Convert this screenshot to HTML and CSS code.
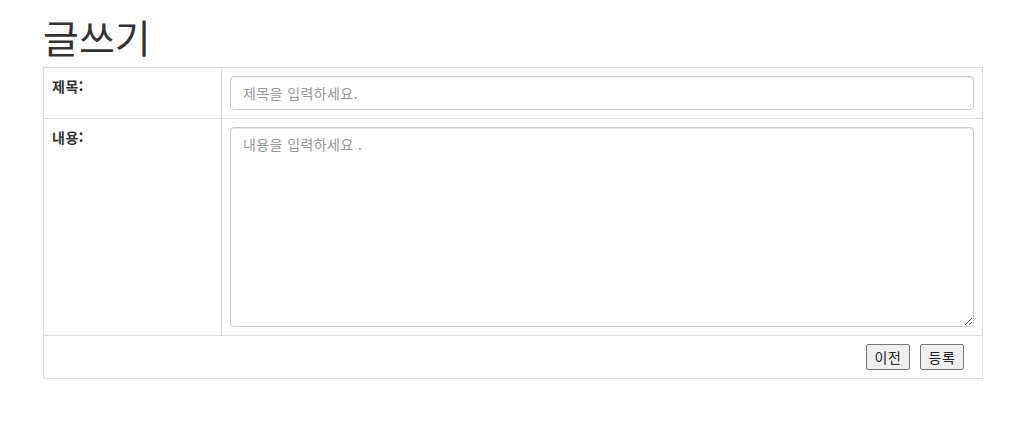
FILE: index.html
```html
<!DOCTYPE html>
<html lang="ko">

<head>
    <meta charset="UTF-8">
    <meta name="viewport" content="width=device-width, initial-scale=1.0">
    <title>글쓰기</title>
    <link rel="stylesheet" href="styles.css">
</head>

<body>
    <div class="container">
        <h1 class="page-title">글쓰기</h1>
        <form class="write-form" onsubmit="return false;">
            <table class="write-table">
                <colgroup>
                    <col class="col-label">
                    <col>
                </colgroup>
                <tr>
                    <th>제목:</th>
                    <td><input type="text" class="form-control" name="title" placeholder="제목을 입력하세요."></td>
                </tr>
                <tr>
                    <th>내용:</th>
                    <td><textarea class="form-control content" name="content" placeholder="내용을 입력하세요 ."></textarea></td>
                </tr>
                <tr>
                    <td colspan="2" class="btn-cell">
                        <div class="btn-bar">
                            <button type="button">이전</button>
                            <button type="submit">등록</button>
                        </div>
                    </td>
                </tr>
            </table>
        </form>
    </div>
</body>

</html>
```

FILE: styles.css
```css
* {
    padding: 0;
    margin: 0;
    box-sizing: border-box;
}

body {
    font-family: "Noto Sans CJK KR", "Liberation Sans", sans-serif;
    font-size: 14px;
    line-height: 20px;
    color: #333333;
    background-color: #FFFFFF;
}

.container {
    width: 940px;
    margin: 0 0 0 43px;
}

.page-title {
    font-size: 39px;
    font-weight: 400;
    line-height: 42px;
    margin: 15px 0 10px 0;
}

.write-table {
    width: 940px;
    border-collapse: collapse;
    table-layout: fixed;
}

.col-label {
    width: 178px;
}

.write-table th,
.write-table td {
    border: 1px solid #DDDDDD;
    padding: 8px;
    vertical-align: top;
    text-align: left;
}

.write-table th {
    font-weight: 700;
    color: #333333;
    letter-spacing: 0.5px;
}

.form-control {
    display: block;
    width: 100%;
    height: 34px;
    padding: 6px 12px;
    font-family: inherit;
    font-size: 14px;
    line-height: 20px;
    letter-spacing: 0.4px;
    color: #555555;
    background-color: #FFFFFF;
    border: 1px solid #CCCCCC;
    border-radius: 4px;
    box-shadow: inset 0 1px 1px rgba(0, 0, 0, .075);
    outline: none;
}

.form-control::placeholder {
    color: #999999;
}

.content {
    height: 200px;
    resize: vertical;
}

.btn-bar {
    display: flex;
    justify-content: flex-end;
    gap: 10px;
    padding-right: 10px;
    height: 26px;
}

.btn-cell button {
    font-family: inherit;
    font-size: 14px;
    line-height: 20px;
    width: 44px;
    height: 26px;
    padding: 1px 6px;
    color: #222222;
    background-color: #EFEFEF;
    border: 1px solid #767676;
    border-radius: 2px;
    letter-spacing: 0.5px;
}
```
